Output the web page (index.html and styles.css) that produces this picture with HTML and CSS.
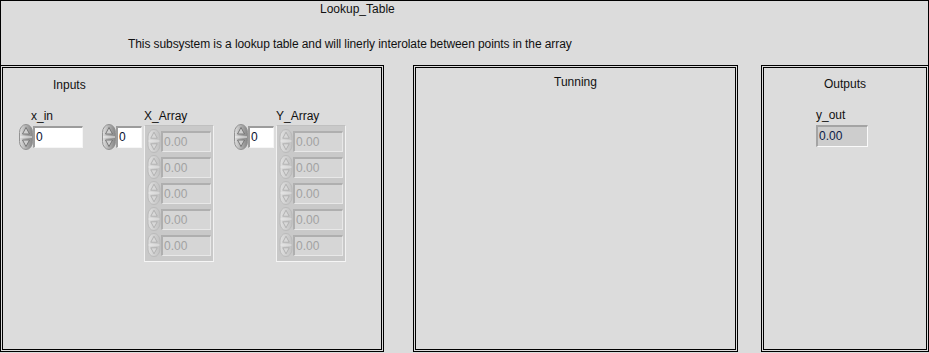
FILE: index.html
```html
<!DOCTYPE html>
<html>
<head>
    <link rel="stylesheet" href="styles.css">
</head>
<body>

<div class="window">
    <div class="header">
        <div class="title">Lookup_Table</div>
        <div class="desc">This subsystem is a lookup table and will linerly interolate between points in the array</div>
    </div>

    <div class="panels">
        <section class="panel panel-inputs">
            <div class="panel-title">Inputs</div>
            <div class="controls">

                <div class="ctl ctl-xin">
                    <div class="label label-xin">x_in</div>
                    <div class="num">
                        <svg class="spin" viewBox="0 0 14 26"><use href="#spinner"/></svg>
                        <div class="box box-wide">0</div>
                    </div>
                </div>

                <div class="ctl ctl-arr ctl-xarr">
                    <div class="num num-idx">
                        <svg class="spin" viewBox="0 0 14 26"><use href="#spinner"/></svg>
                        <div class="box box-idx">0</div>
                    </div>
                    <div class="arr-col">
                        <div class="label">X_Array</div>
                        <div class="frame">
                            <div class="elem"><svg class="spin-off" viewBox="0 0 14 26"><use href="#spinner-off"/></svg><div class="ebox">0.00</div></div>
                            <div class="elem"><svg class="spin-off" viewBox="0 0 14 26"><use href="#spinner-off"/></svg><div class="ebox">0.00</div></div>
                            <div class="elem"><svg class="spin-off" viewBox="0 0 14 26"><use href="#spinner-off"/></svg><div class="ebox">0.00</div></div>
                            <div class="elem"><svg class="spin-off" viewBox="0 0 14 26"><use href="#spinner-off"/></svg><div class="ebox">0.00</div></div>
                            <div class="elem"><svg class="spin-off" viewBox="0 0 14 26"><use href="#spinner-off"/></svg><div class="ebox">0.00</div></div>
                        </div>
                    </div>
                </div>

                <div class="ctl ctl-arr ctl-yarr">
                    <div class="num num-idx">
                        <svg class="spin" viewBox="0 0 14 26"><use href="#spinner"/></svg>
                        <div class="box box-idx">0</div>
                    </div>
                    <div class="arr-col">
                        <div class="label">Y_Array</div>
                        <div class="frame">
                            <div class="elem"><svg class="spin-off" viewBox="0 0 14 26"><use href="#spinner-off"/></svg><div class="ebox">0.00</div></div>
                            <div class="elem"><svg class="spin-off" viewBox="0 0 14 26"><use href="#spinner-off"/></svg><div class="ebox">0.00</div></div>
                            <div class="elem"><svg class="spin-off" viewBox="0 0 14 26"><use href="#spinner-off"/></svg><div class="ebox">0.00</div></div>
                            <div class="elem"><svg class="spin-off" viewBox="0 0 14 26"><use href="#spinner-off"/></svg><div class="ebox">0.00</div></div>
                            <div class="elem"><svg class="spin-off" viewBox="0 0 14 26"><use href="#spinner-off"/></svg><div class="ebox">0.00</div></div>
                        </div>
                    </div>
                </div>

            </div>
        </section>

        <section class="panel panel-tuning">
            <div class="panel-title center tuning-title">Tunning</div>
        </section>

        <section class="panel panel-outputs">
            <div class="panel-title center outputs-title">Outputs</div>
            <div class="out">
                <div class="label">y_out</div>
                <div class="indicator">0.00</div>
            </div>
        </section>
    </div>
</div>

<svg class="defs" width="0" height="0">
    <defs>
        <linearGradient id="spinGrad" x1="0" y1="0" x2="1" y2="0">
            <stop offset="0" stop-color="#e0e0e0"/>
            <stop offset="0.45" stop-color="#b4b4b4"/>
            <stop offset="1" stop-color="#858585"/>
        </linearGradient>
        <linearGradient id="spinGradOff" x1="0" y1="0" x2="1" y2="0">
            <stop offset="0" stop-color="#e0e0e0"/>
            <stop offset="1" stop-color="#c2c2c2"/>
        </linearGradient>
        <g id="spinner">
            <rect x="0.5" y="0.5" width="13" height="25" rx="6.5" ry="8" fill="url(#spinGrad)" stroke="#929292"/>
            <line x1="1" y1="13" x2="13" y2="13" stroke="#f2f2f2"/>
            <polygon points="7,3.5 10.5,10 3.5,10" fill="#cfcfcf" stroke="#666" stroke-width="0.8"/>
            <polygon points="3.5,16 10.5,16 7,22.5" fill="#cfcfcf" stroke="#666" stroke-width="0.8"/>
        </g>
        <g id="spinner-off">
            <rect x="0.5" y="0.5" width="13" height="25" rx="6.5" ry="8" fill="url(#spinGradOff)" stroke="#b8b8b8"/>
            <line x1="1" y1="13" x2="13" y2="13" stroke="#ececec"/>
            <polygon points="7,3.5 10.5,10 3.5,10" fill="#d8d8d8" stroke="#a6a6a6" stroke-width="0.8"/>
            <polygon points="3.5,16 10.5,16 7,22.5" fill="#d8d8d8" stroke="#a6a6a6" stroke-width="0.8"/>
        </g>
    </defs>
</svg>

</body>
</html>
```

FILE: styles.css
```css
body {
    margin: 0;
    background-color: #dcdcdc;
    font-family: "Liberation Sans", Arial, sans-serif;
    font-size: 12px;
    line-height: 16px;
    color: #111;
}
.window {
    width: 929px;
    height: 353px;
}
.defs {
    position: absolute;
}

/* header block */
.header {
    box-sizing: border-box;
    height: 65px;
    border: 1px solid #000;
    border-bottom: none;
}
.title {
    padding-left: 319px;
}
.desc {
    margin-top: 19px;
    padding-left: 127px;
    letter-spacing: -0.09px;
}

/* three framed panels */
.panels {
    display: flex;
    height: 287px;
}
.panel {
    box-sizing: border-box;
    height: 287px;
    border: 3px double #000;
}
.panel-inputs {
    width: 384px;
}
.panel-tuning {
    width: 325px;
    margin-left: 29px;
}
.panel-outputs {
    width: 168px;
    margin-left: 23px;
}
.panel-title {
    margin-top: 9px;
    padding-left: 50px;
}
.panel-title.center {
    padding-left: 0;
    text-align: center;
}
.tuning-title {
    margin-top: 6px;
}
.outputs-title {
    margin-top: 8px;
}

/* controls */
.controls {
    display: flex;
    align-items: flex-start;
    margin-top: 15px;
    padding-left: 16px;
}
.label {
    height: 16px;
    white-space: nowrap;
}
.label-xin {
    padding-left: 12px;
}
.num {
    display: flex;
    align-items: flex-start;
}
.spin {
    width: 14px;
    height: 26px;
    display: block;
}
.box {
    box-sizing: border-box;
    height: 22px;
    margin-top: 2px;
    background: #fff;
    border-top: 2px solid #9c9c9c;
    border-left: 2px solid #9c9c9c;
    border-right: 1px solid #f6f6f6;
    border-bottom: 1px solid #f6f6f6;
    padding-left: 1px;
    line-height: 19px;
    color: #0a1030;
}
.box-wide {
    width: 50px;
}
.box-idx {
    width: 26px;
}

.ctl-arr {
    display: flex;
    align-items: flex-start;
}
.ctl-xarr {
    margin-left: 19px;
}
.ctl-yarr {
    margin-left: 20px;
}
.num-idx {
    margin-top: 16px;
}
.arr-col {
    margin-left: 2px;
}
.frame {
    box-sizing: border-box;
    width: 70px;
    height: 137px;
    margin-top: 1px;
    padding: 3px 2px 2px 2px;
    background: #c9c9c9;
    border-top: 1px solid #c0c0c0;
    border-left: 1px solid #f2f2f2;
    border-right: 1px solid #f2f2f2;
    border-bottom: 1px solid #f6f6f6;
}
.elem {
    display: flex;
    align-items: flex-start;
    height: 26px;
}
.spin-off {
    width: 14px;
    height: 24px;
    display: block;
}
.ebox {
    box-sizing: border-box;
    width: 50px;
    height: 21px;
    margin-top: 2px;
    background: #d6d6d6;
    border-top: 2px solid #afafaf;
    border-left: 2px solid #afafaf;
    border-right: 1px solid #e8e8e8;
    border-bottom: 1px solid #e8e8e8;
    padding-left: 1px;
    line-height: 19px;
    color: #a2a2a2;
}

/* output indicator */
.out {
    margin-top: 15px;
    padding-left: 52px;
}
.indicator {
    box-sizing: border-box;
    width: 52px;
    height: 22px;
    margin-top: 2px;
    background: #cdcdcd;
    border-top: 2px solid #a4a4a4;
    border-left: 2px solid #a4a4a4;
    border-right: 1px solid #fafafa;
    border-bottom: 1px solid #fafafa;
    padding-left: 1px;
    line-height: 19px;
    color: #0a1a48;
}
```
